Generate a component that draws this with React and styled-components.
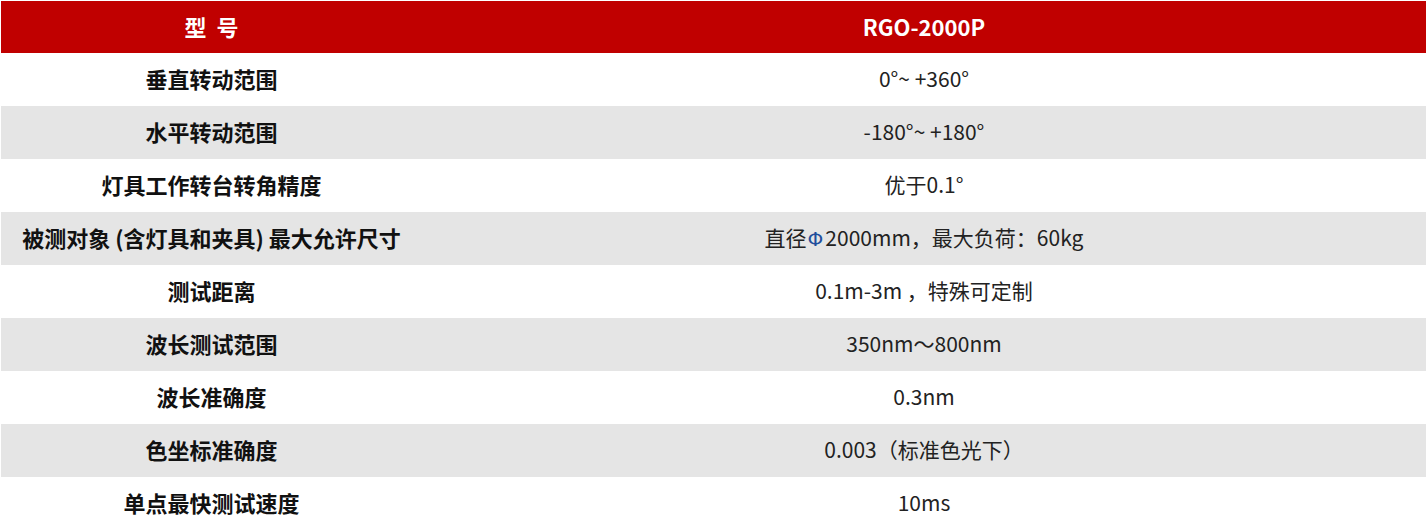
import styled, { createGlobalStyle } from "styled-components";

const GlobalStyle = createGlobalStyle`
  html, body {
    margin: 0;
    padding: 0;
    background: #fff;
  }
  body {
    font-family: "Noto Sans CJK SC", "Noto Sans", sans-serif;
  }
`;

const Phi = styled.span`
  color: #1f4e9c;
  font-family: "DejaVu Sans", sans-serif;
  font-size: 20px;
  margin: 0 2px 0 1px;
`;

const rows = [
  { name: "垂直转动范围", value: "0°~ +360°" },
  { name: "水平转动范围", value: "-180°~ +180°" },
  { name: "灯具工作转台转角精度", value: "优于0.1°" },
  {
    name: "被测对象 (含灯具和夹具) 最大允许尺寸",
    value: (
      <>
        直径<Phi>Φ</Phi>2000mm，最大负荷：60kg
      </>
    ),
  },
  { name: "测试距离", value: "0.1m-3m ，特殊可定制" },
  { name: "波长测试范围", value: "350nm～800nm" },
  { name: "波长准确度", value: "0.3nm" },
  { name: "色坐标准确度", value: "0.003（标准色光下）" },
  { name: "单点最快测试速度", value: "10ms" },
];

const App = () => {
  return (
    <Wrapper>
      <GlobalStyle />
      <Table>
        <colgroup>
          <col style={{ width: 421 }} />
          <col />
        </colgroup>
        <thead>
          <tr>
            <HeadCell>型&nbsp;&nbsp;号</HeadCell>
            <HeadCell>RGO-2000P</HeadCell>
          </tr>
        </thead>
        <tbody>
          {rows.map((row, i) => (
            <Row key={i} $striped={i % 2 === 1}>
              <NameCell>{row.name}</NameCell>
              <ValueCell>{row.value}</ValueCell>
            </Row>
          ))}
        </tbody>
      </Table>
    </Wrapper>
  );
};

const Wrapper = styled.div`
  padding: 1px 1px 0 1px;
`;

const Table = styled.table`
  width: 1425px;
  border-collapse: collapse;
  table-layout: fixed;
`;

const HeadCell = styled.th`
  height: 52px;
  box-sizing: border-box;
  padding: 0 0 3px;
  background: #c00000;
  color: #fff;
  font-size: 22px;
  font-weight: 700;
  text-align: center;
  vertical-align: middle;
`;

const Row = styled.tr`
  background: ${({ $striped }) => ($striped ? "#e5e5e5" : "#fff")};
`;

const NameCell = styled.td`
  height: 53px;
  box-sizing: border-box;
  padding: 0 0 4px;
  color: #111;
  font-size: 22px;
  font-weight: 700;
  text-align: center;
  vertical-align: middle;
`;

const ValueCell = styled.td`
  height: 53px;
  box-sizing: border-box;
  padding: 0 0 4px;
  color: #222;
  font-size: 21px;
  font-weight: 400;
  text-align: center;
  vertical-align: middle;
`;

export default App;
